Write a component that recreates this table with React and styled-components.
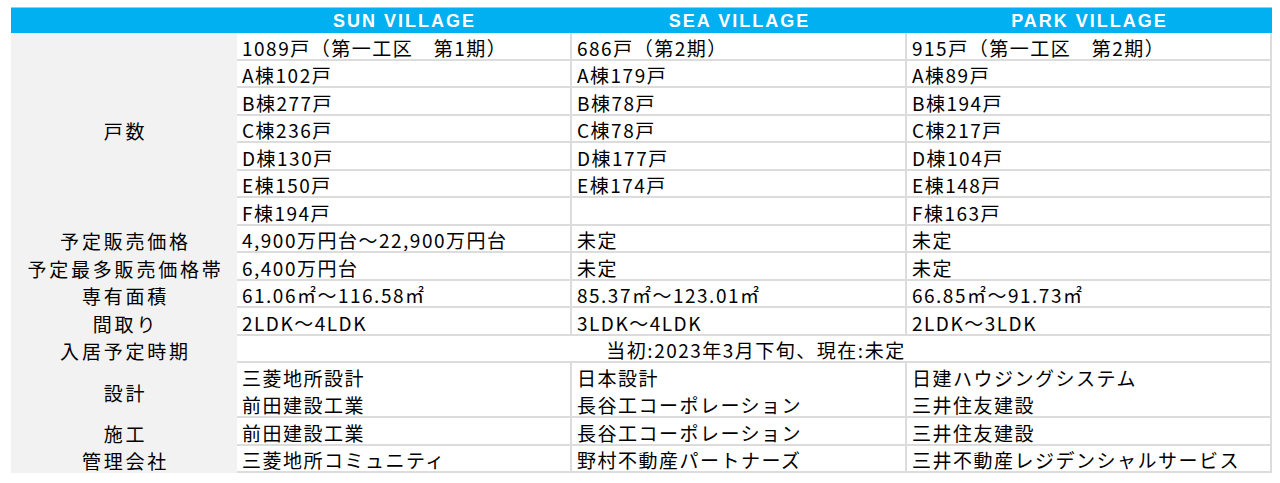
import React from "react";
import styled, { createGlobalStyle } from "styled-components";

const GlobalStyle = createGlobalStyle`
  html, body {
    margin: 0;
    padding: 0;
    background: #ffffff;
  }
  body {
    font-family: "Noto Sans CJK JP", "Noto Sans", sans-serif;
    color: #000;
  }
`;

const villages = ["SUN VILLAGE", "SEA VILLAGE", "PARK VILLAGE"];

// each row: label (with span) + one entry per village
const units = [
  ["1089戸（第一工区　第1期）", "686戸（第2期）", "915戸（第一工区　第2期）"],
  ["A棟102戸", "A棟179戸", "A棟89戸"],
  ["B棟277戸", "B棟78戸", "B棟194戸"],
  ["C棟236戸", "C棟78戸", "C棟217戸"],
  ["D棟130戸", "D棟177戸", "D棟104戸"],
  ["E棟150戸", "E棟174戸", "E棟148戸"],
  ["F棟194戸", "", "F棟163戸"],
];

const singles = [
  ["予定販売価格", ["4,900万円台～22,900万円台", "未定", "未定"]],
  ["予定最多販売価格帯", ["6,400万円台", "未定", "未定"]],
  ["専有面積", ["61.06㎡～116.58㎡", "85.37㎡～123.01㎡", "66.85㎡～91.73㎡"]],
  ["間取り", ["2LDK～4LDK", "3LDK～4LDK", "2LDK～3LDK"]],
];

const design = [
  ["三菱地所設計", "前田建設工業"],
  ["日本設計", "長谷工コーポレーション"],
  ["日建ハウジングシステム", "三井住友建設"],
];

const tail = [
  ["施工", ["前田建設工業", "長谷工コーポレーション", "三井住友建設"]],
  ["管理会社", ["三菱地所コミュニティ", "野村不動産パートナーズ", "三井不動産レジデンシャルサービス"]],
];

const App = () => {
  return (
    <>
      <GlobalStyle />
      <Page>
        <Sheet>
          <HeadCell />
          {villages.map((v) => (
            <HeadCell key={v}>{v}</HeadCell>
          ))}

          <LabelCell $span={units.length}>戸数</LabelCell>
          {units.map((row) =>
            row.map((txt, i) => <DataCell key={row[0] + i}>{txt}</DataCell>)
          )}

          {singles.map(([label, vals]) => (
            <React.Fragment key={label}>
              <LabelCell>{label}</LabelCell>
              {vals.map((txt, i) => (
                <DataCell key={i}>{txt}</DataCell>
              ))}
            </React.Fragment>
          ))}

          <LabelCell>入居予定時期</LabelCell>
          <DataCell $cols={3} $center>
            当初:2023年3月下旬、現在:未定
          </DataCell>

          <LabelCell $span={2}>設計</LabelCell>
          {design.map((lines, i) => (
            <DataCell key={i} $span={2}>
              <Lines>
                {lines.map((l) => (
                  <Line key={l}>{l}</Line>
                ))}
              </Lines>
            </DataCell>
          ))}

          {tail.map(([label, vals]) => (
            <React.Fragment key={label}>
              <LabelCell>{label}</LabelCell>
              {vals.map((txt, i) => (
                <DataCell key={i}>{txt}</DataCell>
              ))}
            </React.Fragment>
          ))}
        </Sheet>
      </Page>
    </>
  );
};

const Page = styled.div`
  padding: 7px 0 0 11px;
`;

const Sheet = styled.div`
  display: grid;
  grid-template-columns: 226px 335px 335px 365px;
  grid-template-rows: 26px;
  grid-auto-rows: 27.5px;
  width: 1261px;
`;

const HeadCell = styled.div`
  background: #00b0f0;
  border-top: 1px solid #7fd6f6;
  box-sizing: border-box;
  color: #ffffff;
  font-family: "Liberation Sans", Arial, sans-serif;
  font-weight: bold;
  font-size: 18px;
  letter-spacing: 2px;
  display: flex;
  align-items: center;
  justify-content: center;
  padding-top: 1px;
`;

const LabelCell = styled.div`
  grid-row: span ${(p) => p.$span || 1};
  background: #f2f2f2;
  font-size: 19px;
  letter-spacing: 2.8px;
  display: flex;
  align-items: center;
  justify-content: center;
  padding: 3px 0 0 3px;
  line-height: 1;
  box-sizing: border-box;
  white-space: nowrap;
`;

const DataCell = styled.div`
  grid-row: span ${(p) => p.$span || 1};
  grid-column: span ${(p) => p.$cols || 1};
  background: #ffffff;
  border-right: 2px solid #dcdcdc;
  border-bottom: 2px solid #dcdcdc;
  box-sizing: border-box;
  font-size: 19px;
  letter-spacing: 1.5px;
  line-height: 1;
  display: flex;
  align-items: center;
  justify-content: ${(p) => (p.$center ? "center" : "flex-start")};
  padding: 3px 0 0 5px;
  white-space: nowrap;
  overflow: hidden;
`;

const Lines = styled.div`
  display: flex;
  flex-direction: column;
`;

const Line = styled.div`
  height: 27.5px;
  display: flex;
  align-items: center;
`;

export default App;
